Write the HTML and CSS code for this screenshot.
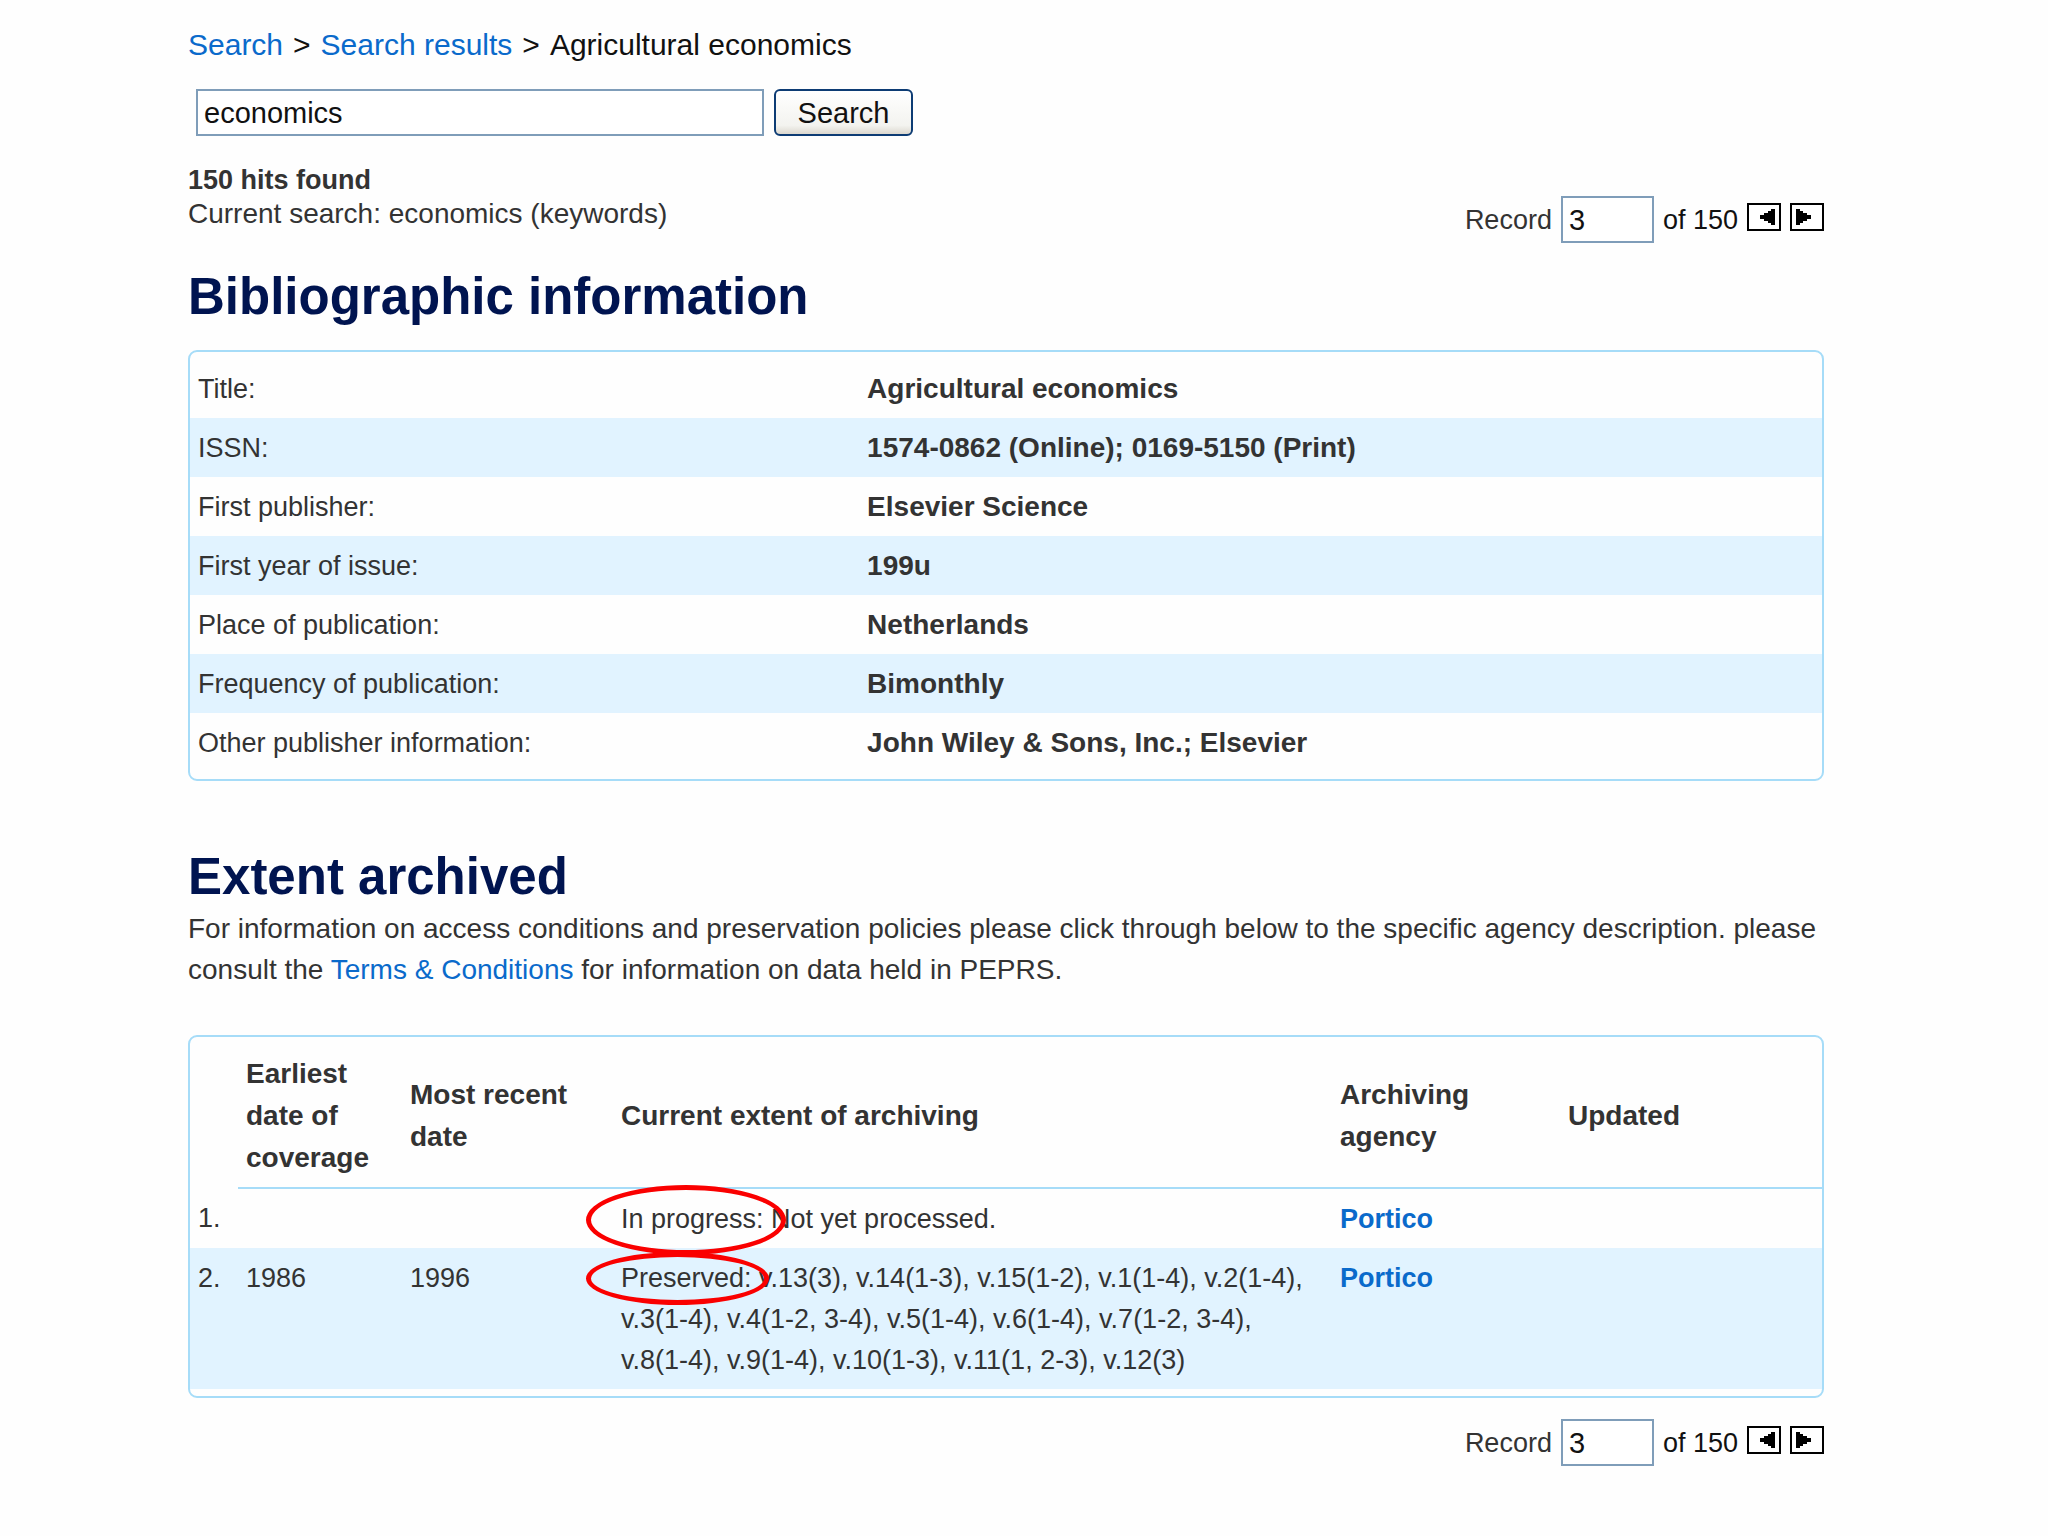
FILE: index.html
```
<!DOCTYPE html>
<html lang="en">
<head>
<meta charset="utf-8">
<title>Agricultural economics</title>
<link rel="stylesheet" href="styles.css">
</head>
<body>
<main class="page">
  <nav class="breadcrumb"><a href="#">Search</a><span>&gt;</span><a href="#">Search results</a><span>&gt;</span><span>Agricultural economics</span></nav>

  <form class="search">
    <input class="field search-field" type="text" value="economics" aria-label="Search terms">
    <button class="search-button" type="button">Search</button>
  </form>

  <div class="summary">
    <div class="hits">
      <strong>150 hits found</strong>
      <span>Current search: economics (keywords)</span>
    </div>
    <form class="pager">
      <label for="record-top">Record</label>
      <input class="field record-field" id="record-top" type="text" value="3">
      <span class="total">of 150</span>
      <button class="step" type="button" aria-label="Previous record"><svg viewBox="0 0 34 28"><rect x="1" y="1" width="32" height="26"/><path d="M10 14h3v-2h4v-2h4v-2h3v-2h4v16h-4v-2h-3v-2h-4v-2h-4v-2h-3z"/></svg></button>
      <button class="step" type="button" aria-label="Next record"><svg viewBox="0 0 34 28"><rect x="1" y="1" width="32" height="26"/><path d="M24 14h-3v-2h-4v-2h-4v-2h-3v-2h-4v16h4v-2h3v-2h4v-2h4v-2h3z"/></svg></button>
    </form>
  </div>

  <h1>Bibliographic information</h1>
  <div class="panel">
    <table class="details">
      <tr><th scope="row">Title:</th><td>Agricultural economics</td></tr>
      <tr><th scope="row">ISSN:</th><td>1574-0862 (Online); 0169-5150 (Print)</td></tr>
      <tr><th scope="row">First publisher:</th><td>Elsevier Science</td></tr>
      <tr><th scope="row">First year of issue:</th><td>199u</td></tr>
      <tr><th scope="row">Place of publication:</th><td>Netherlands</td></tr>
      <tr><th scope="row">Frequency of publication:</th><td>Bimonthly</td></tr>
      <tr><th scope="row">Other publisher information:</th><td>John Wiley &amp; Sons, Inc.; Elsevier</td></tr>
    </table>
  </div>

  <h1 class="second">Extent archived</h1>
  <p class="intro">For information on access conditions and preservation policies please click through below to the specific agency description. please consult the <a href="#">Terms &amp; Conditions</a> for information on data held in PEPRS.</p>

  <div class="panel">
    <table class="extent">
      <colgroup><col class="c-num"><col class="c-first"><col class="c-last"><col><col class="c-agency"><col class="c-updated"></colgroup>
      <thead>
        <tr><td></td><th scope="col">Earliest date of coverage</th><th scope="col">Most recent date</th><th scope="col">Current extent of archiving</th><th scope="col">Archiving agency</th><th scope="col">Updated</th></tr>
      </thead>
      <tbody>
        <tr><td>1.</td><td></td><td></td><td><span class="status">In progress:<i class="ring ring-progress"></i></span> Not yet processed.</td><td><a href="#">Portico</a></td><td></td></tr>
        <tr><td>2.</td><td>1986</td><td>1996</td><td><span class="status">Preserved:<i class="ring ring-preserved"></i></span> v.13(3), v.14(1-3), v.15(1-2), v.1(1-4), v.2(1-4), v.3(1-4), v.4(1-2, 3-4), v.5(1-4), v.6(1-4), v.7(1-2, 3-4), <span class="volume">v.8(1-4)</span>, v.9(1-4), v.10(1-3), v.11(1, 2-3), v.12(3)</td><td><a href="#">Portico</a></td><td></td></tr>
      </tbody>
    </table>
  </div>

  <form class="pager pager-bottom">
    <label for="record-bottom">Record</label>
    <input class="field record-field" id="record-bottom" type="text" value="3">
    <span class="total">of 150</span>
    <button class="step" type="button" aria-label="Previous record"><svg viewBox="0 0 34 28"><rect x="1" y="1" width="32" height="26"/><path d="M10 14h3v-2h4v-2h4v-2h3v-2h4v16h-4v-2h-3v-2h-4v-2h-4v-2h-3z"/></svg></button>
    <button class="step" type="button" aria-label="Next record"><svg viewBox="0 0 34 28"><rect x="1" y="1" width="32" height="26"/><path d="M24 14h-3v-2h-4v-2h-4v-2h-3v-2h-4v16h4v-2h3v-2h4v-2h4v-2h3z"/></svg></button>
  </form>
</main>
</body>
</html>
```
FILE: styles.css
```
* { box-sizing: border-box; }

body {
  margin: 0;
  background: #fefefe;
  color: #333;
  font: 28px/41px "Liberation Sans", Arial, sans-serif;
}

a { color: #0a6acb; text-decoration: none; }

.page { padding: 24px 224px 64px 188px; }

.breadcrumb {
  display: flex;
  gap: 10px;
  font-size: 30px;
  color: #111;
}

.search {
  display: flex;
  gap: 10px;
  margin: 24px 0 0 8px;
}

.field {
  height: 47px;
  padding: 2px 6px 0;
  border: 2px solid #7f9db9;
  background: #fff;
  color: #111;
  font: 29px "Liberation Sans", Arial, sans-serif;
}

.search-field { width: 568px; }

.search-button {
  width: 139px;
  height: 47px;
  padding: 2px 0 0;
  border: 2px solid #0d3c74;
  border-radius: 6px;
  background: linear-gradient(#fff, #f3f3ef 80%, #dcd8cf);
  color: #111;
  font: 29px "Liberation Sans", Arial, sans-serif;
}

.summary {
  display: flex;
  justify-content: space-between;
  align-items: flex-end;
  margin-top: 27px;
}

.hits {
  display: flex;
  flex-direction: column;
  line-height: 34px;
  padding-bottom: 12px;
}

.hits strong { font-size: 27px; }

.pager {
  display: flex;
  align-items: center;
  gap: 9px;
  font-size: 27px;
}

.pager label, .total { padding-top: 2px; }

.record-field { width: 93px; }

.total { color: #111; }

.step {
  width: 34px;
  height: 28px;
  padding: 0;
  border: 0;
  margin-bottom: 5px;
  background: none;
}

.step svg { display: block; width: 34px; height: 28px; }
.step rect { fill: #fff; stroke: #000; stroke-width: 2; }

h1 {
  margin: 25px 0 24px;
  color: #001450;
  font-size: 51px;
  line-height: 58px;
}

.second { margin: 67px 0 2px; }

.intro { margin: 0 0 45px; }

.panel {
  padding: 7px 0;
  border: 2px solid #a6dcf8;
  border-radius: 9px;
}

table {
  width: 100%;
  border-collapse: collapse;
  table-layout: fixed;
}

th, td {
  padding: 9px 8px;
  text-align: left;
  vertical-align: top;
}

.details th {
  width: 41%;
  padding: 10px 8px 8px;
  font-weight: normal;
  font-size: 27px;
}

.details td { font-weight: bold; }

.details tr:nth-child(even),
.extent tbody tr:nth-child(even) { background: #e1f3ff; }

.c-num { width: 48px; }
.c-first { width: 164px; }
.c-last { width: 211px; }
.c-agency { width: 228px; }
.c-updated { width: 262px; }

.extent td { padding: 10px 8px 8px; font-size: 27px; }
.extent td:first-child { padding-right: 0; }

.extent thead th {
  padding-bottom: 8px;
  border-bottom: 2px solid #a6dcf8;
  line-height: 42px;
  vertical-align: middle;
}

.extent a { font-weight: bold; }

/* Red ellipses drawn over the status words */
.status { position: relative; }
.volume { white-space: nowrap; }

.ring {
  position: absolute;
  left: -35px;
  border: 5px solid #fa0000;
  border-radius: 50%;
}

.ring-progress { top: -19px; width: 200px; height: 70px; }
.ring-preserved { top: -11px; width: 183px; height: 53px; }

.pager-bottom { justify-content: flex-end; margin-top: 21px; }
```
